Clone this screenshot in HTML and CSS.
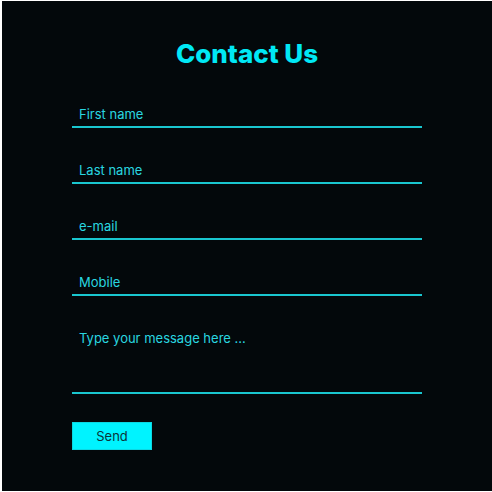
FILE: index.html
```html
<!DOCTYPE html>
<html lang="en">
<head>
<meta charset="utf-8">
<title>Contact Us</title>
<link rel="stylesheet" href="styles.css">
</head>
<body>
<div class="panel">
  <h1 class="title">Contact Us</h1>
  <form class="form">
    <input class="field" type="text" placeholder="First name">
    <input class="field" type="text" placeholder="Last name">
    <input class="field" type="email" placeholder="e-mail">
    <input class="field" type="tel" placeholder="Mobile">
    <textarea class="field message" placeholder="Type your message here ..."></textarea>
    <button class="send" type="button">Send</button>
  </form>
</div>
</body>
</html>
```

FILE: styles.css
```css
html, body {
  margin: 0;
  padding: 0;
  background: #ffffff;
}
body {
  padding: 1px 0 1px 2px;
  font-family: "Inter", "Noto Sans", "Liberation Sans", sans-serif;
}
.panel {
  background: #03080b;
  height: 490px;
  box-sizing: border-box;
  padding-top: 38px;
}
.title {
  margin: 0;
  text-align: center;
  font-size: 26px;
  line-height: 30px;
  font-weight: 800;
  color: #00e8f5;
}
.form {
  width: 350px;
  margin: 29px auto 0;
  display: flex;
  flex-direction: column;
  gap: 26px;
  align-items: flex-start;
}
.field {
  width: 100%;
  box-sizing: border-box;
  height: 30px;
  margin: 0;
  padding: 8px 7px 4px;
  border: 0;
  border-bottom: 2px solid #19c6cf;
  background: transparent;
  font-family: inherit;
  font-size: 13px;
  line-height: 16px;
  color: #29d7e0;
  outline: none;
  resize: none;
}
.field::placeholder {
  color: #29d7e0;
  opacity: 1;
}
.message {
  height: 72px;
  display: block;
}
.send {
  margin-top: 2px;
  width: 80px;
  height: 28px;
  background: #00f3ff;
  border: 1px solid #0bd8e2;
  color: #0b3338;
  font-family: inherit;
  font-size: 13px;
  padding: 0;
}
```
